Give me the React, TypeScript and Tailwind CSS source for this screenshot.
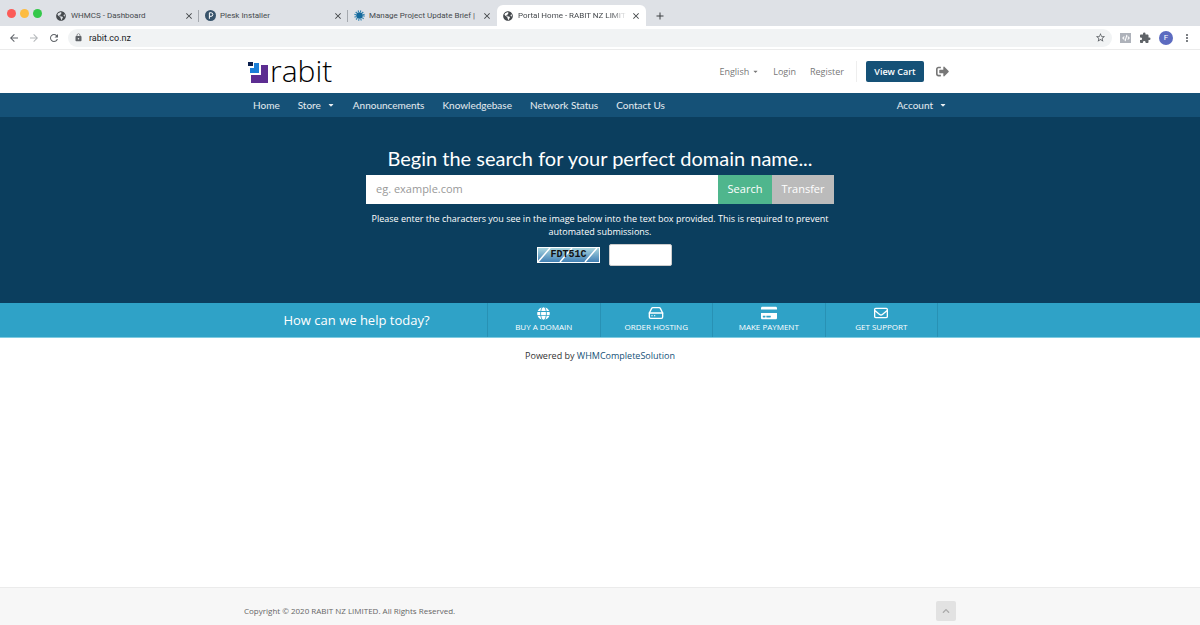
import React, { useState } from 'react';
import { MdArrowBack, MdArrowForward, MdRefresh, MdLock, MdStarBorder, MdExtension, MdMoreVert, MdClose, MdAdd } from 'react-icons/md';
import { FaGlobe, FaGlobeAmericas, FaCreditCard, FaSignOutAlt, FaChevronUp, FaCaretDown, FaCode } from 'react-icons/fa';
import { FiHardDrive } from 'react-icons/fi';
import { FaRegEnvelope } from 'react-icons/fa6';

interface Tab {
  id: string;
  title: string;
  icon: React.ReactNode;
}

const PleskIcon = () => (
  <svg viewBox="0 0 20 20" className="w-[11px] h-[11px]">
    <circle cx="10" cy="10" r="10" fill="#38536b" />
    <path d="M8 16V5h3a3 3 0 0 1 0 6.500H8" fill="none" stroke="#fff" strokeWidth="1.800" />
  </svg>
);

const BurstIcon = () => (
  <svg viewBox="0 0 20 20" className="w-[11px] h-[11px]">
    <circle cx="10" cy="10" r="6" fill="#14699c" />
    <circle cx="10" cy="10" r="8" fill="none" stroke="#2b7fae" strokeWidth="3" strokeDasharray="2 2.200" />
  </svg>
);

const tabs: Tab[] = [
  { id: 'whmcs', title: 'WHMCS - Dashboard', icon: <FaGlobeAmericas className="text-[10px] text-[#45494d]" /> },
  { id: 'plesk', title: 'Plesk Installer', icon: <PleskIcon /> },
  { id: 'brief', title: 'Manage Project Update Brief |', icon: <BurstIcon /> },
  { id: 'portal', title: 'Portal Home - RABIT NZ LIMIT', icon: <FaGlobeAmericas className="text-[10px] text-[#45494d]" /> },
];

const navItems = ['Home', 'Store', 'Announcements', 'Knowledgebase', 'Network Status', 'Contact Us'];

const shortcuts = [
  { label: 'BUY A DOMAIN', icon: <FaGlobe className="text-[13px]" /> },
  { label: 'ORDER HOSTING', icon: <FiHardDrive className="text-[16px]" /> },
  { label: 'MAKE PAYMENT', icon: <FaCreditCard className="text-[16px]" /> },
  { label: 'GET SUPPORT', icon: <FaRegEnvelope className="text-[14px]" /> },
];

const BrowserBar = () => (
  <div className="font-[Roboto,sans-serif]">
    {/* Tab strip */}
    <div className="h-[26px] bg-[#dee1e6] flex items-end">
      <div className="flex items-center gap-1 w-[50px] h-[26px] pl-[7px] shrink-0">
        <span className="w-[9px] h-[9px] rounded-full bg-[#fc5b57]"></span>
        <span className="w-[9px] h-[9px] rounded-full bg-[#fdbc40]"></span>
        <span className="w-[9px] h-[9px] rounded-full bg-[#34c84a]"></span>
      </div>
      {tabs.map((tab) => {
        const active = tab.id === 'portal';
        const divided = tab.id === 'whmcs' || tab.id === 'plesk';
        return (
          <div key={tab.id} className={`w-[149px] h-[21px] flex items-center ${active ? 'bg-white rounded-t-md' : ''}`}>
            <div className={`flex-1 min-w-0 h-3 flex items-center gap-1 pl-1.5 pr-1 border-r ${divided ? 'border-[#a5a9af]' : 'border-transparent'}`}>
              <span className="shrink-0 w-[11px]">{tab.icon}</span>
              <span className={`flex-1 text-[8px] leading-3 text-[#45494d] whitespace-nowrap ${active ? '[mask-image:linear-gradient(to_right,black_85%,transparent)]' : ''}`}>
                {tab.title}
              </span>
              <button type="button" aria-label={`Close ${tab.title}`} className="shrink-0 text-[10px] text-[#3c4043]">
                <MdClose />
              </button>
            </div>
          </div>
        );
      })}
      <button type="button" aria-label="New tab" className="h-[21px] pl-2 text-[12px] text-[#3c4043]"><MdAdd /></button>
    </div>

    {/* Toolbar */}
    <div className="h-6 bg-white flex items-center pl-2 pr-[7px] gap-2 text-[#5f6368] border-b border-[#ebebeb]">
      <button type="button" aria-label="Back" className="text-[12px]"><MdArrowBack /></button>
      <button type="button" aria-label="Forward" className="text-[12px] text-[#b4b7ba]"><MdArrowForward /></button>
      <button type="button" aria-label="Reload" className="text-[12px]"><MdRefresh /></button>
      <div className="flex-1 h-[18px] rounded-full bg-[#f1f3f4] flex items-center gap-1.5 px-1.5">
        <MdLock className="text-[9px]" />
        <input
          aria-label="Address"
          defaultValue="rabit.co.nz"
          className="flex-1 text-[9px] leading-3 text-[#202124] bg-transparent outline-none"
        />
        <MdStarBorder className="text-[11px]" />
      </div>
      <span className="w-[11px] h-[10px] bg-[#aeb2ba] text-white text-[8px] flex items-center justify-center"><FaCode /></span>
      <MdExtension className="text-[12px]" />
      <span className="w-[14px] h-[14px] rounded-full bg-[#5c6bc0] text-white text-[8px] flex items-center justify-center">F</span>
      <MdMoreVert className="text-[12px]" />
    </div>
  </div>
);

const Logo = () => (
  <a href="#" aria-label="rabit" className="flex items-center h-6">
    <svg viewBox="0 0 22 24" className="w-[22px] h-6">
      <path d="M13 5h7v18H3v-8h10z" fill="#5c2d91" />
      <path d="M6 3h5v10H2V8h4z" fill="#1a7fd8" />
      <path d="M0 2h5v4H0z" fill="#0b1f4d" />
    </svg>
    <span className="font-['Open_Sans',sans-serif] font-light text-[30px] leading-6 text-black pb-0.5">rabit</span>
  </a>
);

export default function App() {
  const [domain, setDomain] = useState('');
  const [captcha, setCaptcha] = useState('');

  return (
    <div className="min-h-screen flex flex-col bg-white font-['Open_Sans',sans-serif]">
      <BrowserBar />

      {/* Header */}
      <header className="w-full max-w-[712px] mx-auto h-[43px] pl-1 pr-[7px] flex items-center justify-between">
        <Logo />
        <div className="flex items-center text-[9px] leading-3 text-[#777]">
          <a href="#" className="flex items-center gap-[3px] mr-3.5">English <FaCaretDown className="text-[7px]" /></a>
          <a href="#" className="mr-3.5">Login</a>
          <a href="#" className="mr-3">Register</a>
          <div className="flex items-center h-[21px] border-l border-[#eee] pl-[9px]">
            <a href="#" className="w-[58px] h-[21px] rounded-xs bg-[#155177] text-white font-semibold flex items-center justify-center">View Cart</a>
            <button type="button" aria-label="Log out" className="ml-3 text-[13px]"><FaSignOutAlt /></button>
          </div>
        </div>
      </header>

      {/* Main menu */}
      <nav className="bg-[#155177] text-white/90">
        <div className="w-full max-w-[712px] mx-auto h-6 px-[9px] flex items-center gap-[18px] font-[Lato,sans-serif] text-[10px]">
          {navItems.map((item) => (
            <a key={item} href="#" className="flex items-center gap-1.5">
              {item}
              {item === 'Store' && <FaCaretDown className="text-[8px]" />}
            </a>
          ))}
          <a href="#" className="flex items-center gap-1.5 ml-auto">Account <FaCaretDown className="text-[8px]" /></a>
        </div>
      </nav>

      {/* Domain search */}
      <section className="bg-[#0b3e5e] text-white pt-[29px] pb-[37px]">
        <form className="w-full max-w-[468px] mx-auto flex flex-col items-center" onSubmit={(e) => e.preventDefault()}>
          <h2 className="font-[Lato,sans-serif] text-[20px] leading-6 mb-[5px] whitespace-nowrap">Begin the search for your perfect domain name...</h2>
          <div className="flex w-full h-[29px] text-[11px]">
            <input
              aria-label="Domain name"
              value={domain}
              onChange={(e) => setDomain(e.target.value)}
              placeholder="eg. example.com"
              className="flex-1 min-w-0 bg-white px-2.5 text-[#333] placeholder:text-[#999] outline-none"
            />
            <button type="submit" className="w-[54px] bg-[#4fb68d]">Search</button>
            <button type="button" className="w-[62px] bg-[#bbb]">Transfer</button>
          </div>
          <label htmlFor="captcha" className="mt-2 px-1 text-center text-[9px] leading-[13px] font-medium">
            Please enter the characters you see in the image below into the text box provided. This is required to prevent automated submissions.
          </label>
          <div className="flex items-center gap-[9px] mt-[6px] pl-[9px]">
            <div className="w-[63px] h-4 border border-white bg-linear-to-b from-[#a9d6df] to-[#4180b4] relative overflow-hidden flex items-center justify-center">
              <svg viewBox="0 0 61 14" className="absolute inset-0 w-full h-full">
                <path d="M0 14L12 0M22 14L34 0M47 14L59 0" stroke="#fff" strokeWidth="1.500" />
              </svg>
              <span className="relative font-['Liberation_Mono',monospace] font-bold text-[10px] leading-3 text-[#111]">FDT51C</span>
            </div>
            <input
              id="captcha"
              value={captcha}
              onChange={(e) => setCaptcha(e.target.value)}
              className="w-[63px] h-[22px] rounded-xs bg-white border border-[#ccc] px-1 text-[9px] text-[#333]"
            />
          </div>
        </form>
      </section>

      {/* Shortcuts */}
      <section className="bg-[#2fa2c7] border-b border-[#7fcbe1] text-white">
        <div className="w-full max-w-[712px] mx-auto h-[34px] flex">
          <h2 className="w-[225px] mr-[18px] text-center text-[13px] leading-[34px]">How can we help today?</h2>
          <ul className="flex w-[451px] border-l border-[#2891b4]">
            {shortcuts.map((item) => (
              <li key={item.label} className="flex-1 border-r border-[#2891b4]">
                <a href="#" className="flex flex-col items-center pt-[2px] text-[8px] leading-3 font-medium">
                  <span className="h-4 flex items-center">{item.icon}</span>
                  {item.label}
                </a>
              </li>
            ))}
          </ul>
        </div>
      </section>

      <p className="text-center text-[9px] leading-3 mt-3 text-[#333]">
        Powered by <a href="#" className="text-[#155177]">WHMCompleteSolution</a>
      </p>

      {/* Footer */}
      <footer className="mt-auto bg-[#f7f7f7] border-t border-[#ebebeb]">
        <div className="w-full max-w-[712px] mx-auto h-[37px] pt-2 flex items-center justify-between text-[8px] leading-3 text-[#666]">
          <p>Copyright © 2020 RABIT NZ LIMITED. All Rights Reserved.</p>
          <a href="#" aria-label="Back to top" className="w-5 h-5 rounded-xs bg-[#e2e2e2] text-[#aaa] flex items-center justify-center"><FaChevronUp /></a>
        </div>
      </footer>
    </div>
  );
}
